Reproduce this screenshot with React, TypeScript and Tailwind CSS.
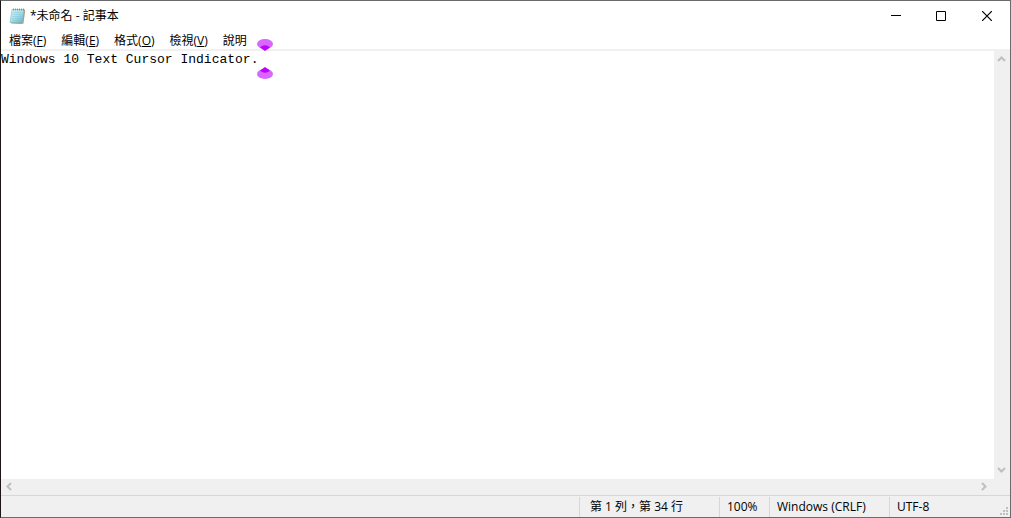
import { useState } from "react";

const menus = [
  { label: "檔案", key: "F" },
  { label: "編輯", key: "E" },
  { label: "格式", key: "O" },
  { label: "檢視", key: "V" },
  { label: "說明", key: "" },
];

function NotepadIcon() {
  return (
    <svg width="17" height="17" viewBox="0 0 17 17" aria-hidden="true">
      <defs>
        <linearGradient id="page" x1="0" y1="0" x2="1" y2="1">
          <stop offset="0" stopColor="#d9f3f8" />
          <stop offset="0.5" stopColor="#a9dfea" />
          <stop offset="1" stopColor="#58b0c8" />
        </linearGradient>
      </defs>
      <path d="M4 2 L16 1.5 L16 4 L14.5 15.5 L12.5 16 L2 15.5 Z" fill="#b79d76" />
      <path d="M3 1.5 L15 1.5 L13.3 14.5 L1 14.5 Z" fill="url(#page)" stroke="#7db9c7" strokeWidth="0.6" />
      <path d="M4 4.5h9M3.8 6.5h9M3.5 8.5h9M3.2 10.5h9M3 12.5h9" stroke="#83c6d4" strokeWidth="0.5" />
      <path d="M4.5 0.5v2M6.5 0.5v2M8.5 0.5v2M10.5 0.5v2M12.5 0.5v2M14.5 0.5v2" stroke="#70858b" strokeWidth="0.8" />
    </svg>
  );
}

function Arrow({ path, label }: { path: string; label: string }) {
  return (
    <button type="button" aria-label={label} className="flex size-4 shrink-0 items-center justify-center">
      <svg width="10" height="10" viewBox="0 0 10 10" fill="none" stroke="#bfbfbf" strokeWidth="2">
        <path d={path} />
      </svg>
    </button>
  );
}

function CursorIndicator() {
  return (
    <svg
      className="pointer-events-none absolute -top-3 left-[255px]"
      width="18"
      height="40"
      viewBox="0 0 18 40"
      aria-hidden="true"
    >
      <ellipse cx="9" cy="5" rx="8" ry="5" fill="#d966ff" />
      <path d="M4 8.5 Q9 4 14 8.5 L9 12 Z" fill="#bf00ff" />
      <ellipse cx="9" cy="35" rx="8" ry="5" fill="#d966ff" />
      <path d="M4 31.5 L9 28 L14 31.5 Q9 36 4 31.5 Z" fill="#bf00ff" />
    </svg>
  );
}

export default function App() {
  const [text, setText] = useState("Windows 10 Text Cursor Indicator.");

  return (
    <div className="flex h-screen flex-col border border-[#6b6b6d] border-l-[#1b1614] bg-white font-['Open_Sans','Noto_Sans_CJK_TC',sans-serif] text-xs text-black">
      <header className="flex h-[30px] shrink-0 items-center pl-2">
        <NotepadIcon />
        <h1 className="ml-1 flex-1">*未命名 - 記事本</h1>
        <button type="button" aria-label="最小化" className="flex h-full w-[45px] items-center justify-center">
          <svg width="10" height="10" viewBox="0 0 10 10">
            <path d="M0 4.5h10" stroke="#000" />
          </svg>
        </button>
        <button type="button" aria-label="最大化" className="flex h-full w-[45px] items-center justify-center">
          <svg width="10" height="10" viewBox="0 0 10 10">
            <path d="M.5.5h9v9h-9z" fill="none" stroke="#000" />
          </svg>
        </button>
        <button type="button" aria-label="關閉" className="flex h-full w-[47px] items-center justify-center">
          <svg width="10" height="10" viewBox="0 0 10 10">
            <path d="M0 0L10 10M10 0L0 10" stroke="#000" strokeWidth="1.2" />
          </svg>
        </button>
      </header>

      <nav className="flex h-5 shrink-0 items-end gap-[15px] border-b-2 border-[#f0f0f0] pl-2">
        {menus.map((menu) => (
          <button type="button" key={menu.label} className="leading-4">
            {menu.label}
            {menu.key && (
              <>
                (<u>{menu.key}</u>)
              </>
            )}
          </button>
        ))}
      </nav>

      <main className="flex min-h-0 flex-1 flex-col bg-[#f0f0f0]">
        <div className="flex min-h-0 flex-1">
          <div className="relative flex flex-1">
            <textarea
              aria-label="文字編輯區"
              spellCheck={false}
              value={text}
              onChange={(event) => setText(event.target.value)}
              className="flex-1 resize-none overflow-hidden bg-white font-['Liberation_Mono','Noto_Sans_CJK_TC',monospace] text-[13px]/[18px] outline-none"
            />
            <CursorIndicator />
          </div>
          <div className="flex w-4 flex-col justify-between">
            <Arrow label="向上捲動" path="M1 7L4.5 3.5L8 7" />
            <Arrow label="向下捲動" path="M1 2L4.5 5.5L8 2" />
          </div>
        </div>
        <div className="flex h-4 shrink-0 justify-between pr-[18px]">
          <Arrow label="向左捲動" path="M7 1L3.5 4.5L7 8" />
          <Arrow label="向右捲動" path="M3 1L6.5 4.5L3 8" />
        </div>
      </main>

      <footer className="flex h-[22px] shrink-0 justify-end border-t border-[#d7d7d7] bg-[#f0f0f0] pt-px leading-5">
        <span className="w-[140px] border-l border-[#d7d7d7] pl-2.5">第 1 列，第 34 行</span>
        <span className="w-[50px] border-l border-[#d7d7d7] pl-[7px]">100%</span>
        <span className="w-[120px] border-l border-[#d7d7d7] pl-[7px]">Windows (CRLF)</span>
        <span className="flex w-[121px] justify-between border-l border-[#d7d7d7] pl-[7px]">
          UTF-8
          <svg width="12" height="20" viewBox="0 0 12 20" fill="#bfbfbf" aria-hidden="true">
            <path d="M8 10h2v2h-2zM5 13h2v2h-2zM8 13h2v2h-2zM2 16h2v2h-2zM5 16h2v2h-2zM8 16h2v2h-2z" />
          </svg>
        </span>
      </footer>
    </div>
  );
}
